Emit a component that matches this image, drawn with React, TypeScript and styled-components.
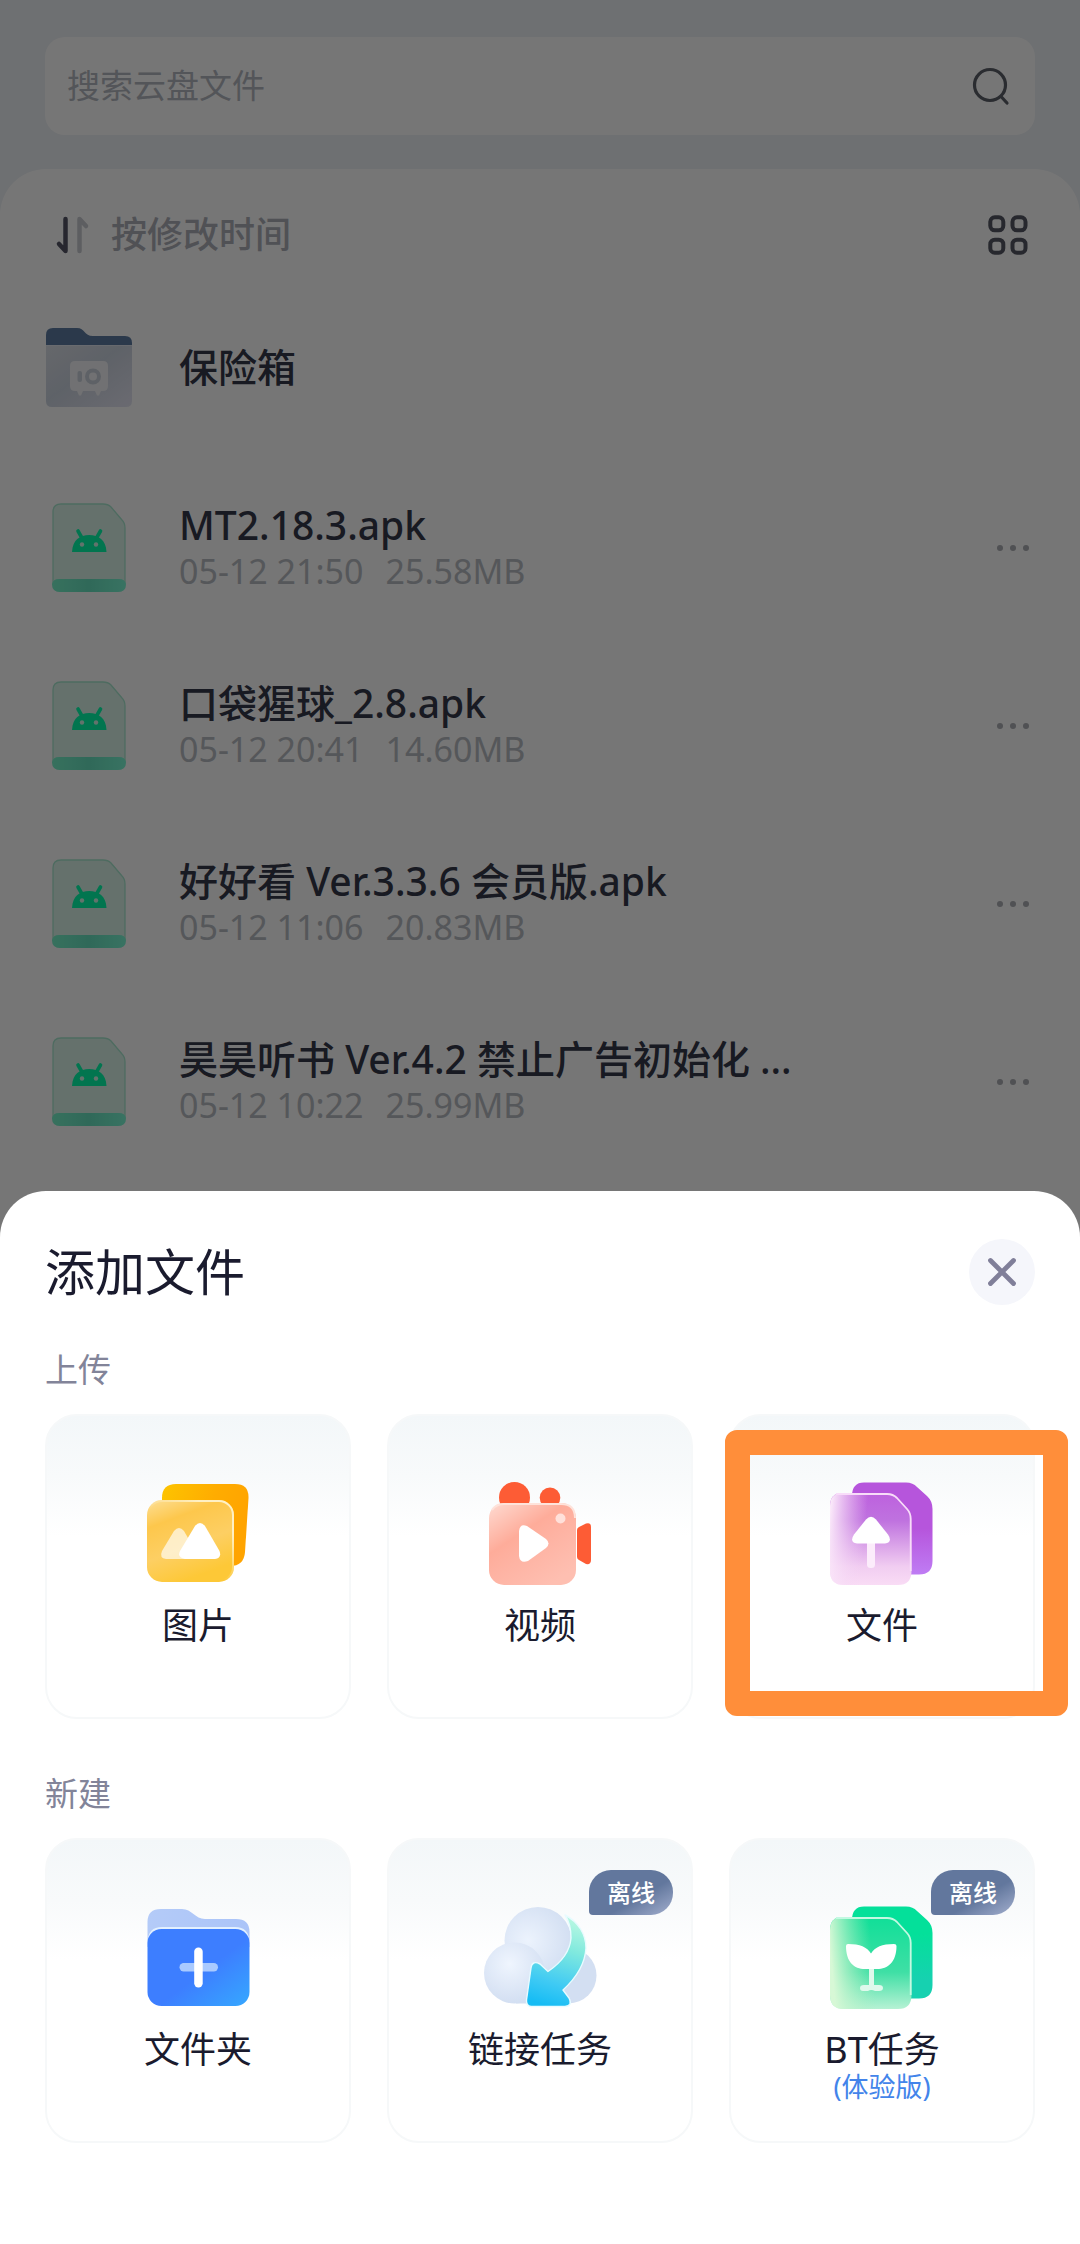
import React from 'react';
import styled, { createGlobalStyle } from 'styled-components';

const GlobalStyle = createGlobalStyle`
  * {
    box-sizing: border-box;
  }

  body {
    margin: 0;
    background: #eef2f6;
    color: #1a1b2e;
    font-family: 'Noto Sans', 'Noto Sans CJK SC', sans-serif;
  }

  button {
    padding: 0;
    border: 0;
    background: none;
    color: inherit;
    font: inherit;
    cursor: pointer;
  }

  h1, h2, ul, p {
    margin: 0;
    padding: 0;
  }

  ul {
    list-style: none;
  }

  svg {
    display: block;
    flex: none;
  }
`;

const Screen = styled.div`
  display: flex;
  flex-direction: column;
  min-height: 100vh;
`;

const TopBar = styled.header`
  padding: 37px 45px 34px;
`;

const SearchBox = styled.label`
  display: flex;
  align-items: center;
  height: 98px;
  padding: 0 24px 0 22px;
  border-radius: 20px;
  background: #fff;
`;

const SearchInput = styled.input`
  flex: 1;
  min-width: 0;
  padding: 0;
  border: 0;
  outline: 0;
  background: none;
  font: inherit;
  font-size: 33px;
  line-height: 48px;

  &::placeholder {
    color: #b4b7c0;
    opacity: 1;
  }
`;

const Panel = styled.main`
  flex: 1;
  padding: 30px 45px 0;
  border-radius: 46px 46px 0 0;
  background: #fff;
`;

const SortBar = styled.div`
  display: flex;
  align-items: center;
  justify-content: space-between;
  height: 72px;
  padding: 0 7px 0 10px;
`;

const SortButton = styled.button`
  display: flex;
  align-items: center;
  gap: 20px;
  color: #adb0b9;
  font-size: 36px;
  font-weight: 500;
  line-height: 48px;
`;

const FileList = styled.ul`
  padding-top: 4px;
`;

const FileRow = styled.li<{ $tall?: boolean }>`
  display: grid;
  grid-template-columns: 87px 1fr 44px;
  align-items: center;
  column-gap: 47px;
  height: ${({ $tall }) => ($tall ? 184 : 178)}px;
`;

const IconSlot = styled.div`
  display: flex;
  justify-content: center;
`;

const FileText = styled.div`
  min-width: 0;
`;

const FileName = styled.p`
  color: #35384a;
  font-size: 39px;
  font-weight: 500;
  line-height: 46px;
  white-space: nowrap;
`;

const FileMeta = styled.p`
  display: flex;
  gap: 22px;
  color: #b9bcc3;
  font-size: 34px;
  line-height: 46px;
`;

const Backdrop = styled.div`
  position: fixed;
  inset: 0;
  display: flex;
  flex-direction: column;
  justify-content: flex-end;
  background: rgba(0, 0, 0, 0.537);
`;

const Sheet = styled.section`
  padding: 47px 45px 101px;
  border-radius: 46px 46px 0 0;
  background: #fff;
`;

const SheetHeader = styled.header`
  display: flex;
  align-items: center;
  justify-content: space-between;
  margin-bottom: 40px;
`;

const SheetTitle = styled.h1`
  font-size: 50px;
  font-weight: 400;
  line-height: 68px;
`;

const CloseButton = styled.button`
  display: flex;
  align-items: center;
  justify-content: center;
  width: 66px;
  height: 66px;
  border-radius: 50%;
  background: #f5f6fb;
`;

const Group = styled.section`
  & + & {
    margin-top: 51px;
  }
`;

const GroupTitle = styled.h2`
  margin-bottom: 20px;
  color: #828499;
  font-size: 33px;
  font-weight: 400;
  line-height: 48px;
`;

const CardGrid = styled.ul`
  display: grid;
  grid-template-columns: repeat(3, 1fr);
  gap: 36px;
`;

const CardItem = styled.li`
  position: relative;
`;

const Card = styled.button`
  display: flex;
  flex-direction: column;
  align-items: center;
  width: 100%;
  min-height: 305px;
  padding-top: 62px;
  border: 2px solid #f6f8f9;
  border-radius: 32px;
  background: linear-gradient(#f3f7f9, #f8fafb 20%, #fff 40%);
`;

const CardLabel = styled.span`
  margin-top: 16px;
  font-size: 36px;
  line-height: 44px;
`;

const CardNote = styled.span`
  color: #4384ea;
  font-size: 27px;
  line-height: 30px;
`;

const Badge = styled.span`
  position: absolute;
  top: 32px;
  right: 20px;
  padding: 0 18px;
  border-radius: 22px 22px 22px 4px;
  background: linear-gradient(150deg, #62779d 60%, #a3afce);
  color: #fff;
  font-size: 24px;
  font-weight: 500;
  line-height: 45px;
`;

const Highlight = styled.div`
  position: absolute;
  inset: 16px -33px 3px -4px;
  border: 25px solid #ff8e3a;
  border-radius: 12px;
  pointer-events: none;
`;

const SearchIcon = () => (
  <svg width="40" height="40" viewBox="0 0 40 40" fill="none" stroke="#5c5f69" strokeWidth="3.2" strokeLinecap="round">
    <circle cx="19" cy="19" r="15.5" />
    <path d="M30.5 31L36 37" />
  </svg>
);

const SortIcon = () => (
  <svg width="36" height="40" viewBox="0 0 36 40" fill="none" strokeWidth="4.5" strokeLinecap="round" strokeLinejoin="round">
    <path d="M10.500 4V36L4 29" stroke="#545667" />
    <path d="M24.500 36V4L31 11" stroke="#c9cbd1" />
  </svg>
);

const GridIcon = () => (
  <svg width="40" height="40" viewBox="0 0 40 40" fill="none" stroke="#545763" strokeWidth="4">
    <rect x="2.300" y="2.300" width="13" height="13" rx="4.500" />
    <rect x="24.500" y="2.300" width="13" height="13" rx="4.500" />
    <rect x="2.300" y="24.700" width="13" height="13" rx="4.500" />
    <rect x="24.500" y="24.700" width="13" height="13" rx="4.500" />
  </svg>
);

const MoreIcon = () => (
  <svg width="44" height="44" viewBox="0 0 44 44" fill="#adafb5">
    <circle cx="9" cy="22" r="3" />
    <circle cx="22" cy="22" r="3" />
    <circle cx="35" cy="22" r="3" />
  </svg>
);

const CloseIcon = () => (
  <svg width="30" height="30" viewBox="0 0 30 30" stroke="#807f99" strokeWidth="4.8" strokeLinecap="round">
    <path d="M3.500 3.500L26.500 26.500M26.500 3.500L3.500 26.500" />
  </svg>
);

const SafeIcon = () => (
  <svg width="86" height="80" viewBox="0 0 86 80">
    <defs>
      <linearGradient id="safeFront" x1="0" y1="0" x2="1" y2="1">
        <stop offset="0" stopColor="#dce0e8" />
        <stop offset="0.450" stopColor="#ccd4e0" />
        <stop offset="1" stopColor="#e6e6f4" />
      </linearGradient>
    </defs>
    <path d="M0 26V8Q0 1 7 1H31C39 1 38 9 47 9H79Q86 9 86 16V26Z" fill="#5d7ca2" />
    <path d="M0 18H86V74Q86 80 80 80H6Q0 80 0 74Z" fill="url(#safeFront)" />
    <path d="M0 18.500H86" stroke="#e9eef6" strokeOpacity="0.600" />
    <path d="M29 34H57Q62 34 62 39V59Q62 64 57 64H55L53 68.500H51L49 64H37L35 68.500H33L31 64H29Q24 64 24 59V39Q24 34 29 34Z" fill="#f4f5f8" />
    <rect x="31.500" y="44" width="4.500" height="11" rx="2" fill="#ccd2dd" />
    <circle cx="47" cy="49.500" r="6" fill="none" stroke="#ccd2dd" strokeWidth="4" />
  </svg>
);

const ApkIcon = () => (
  <svg width="74" height="90" viewBox="0 0 74 90">
    <defs>
      <linearGradient id="apkBar" x1="0" y1="0" x2="1" y2="0">
        <stop offset="0" stopColor="#78f4cb" />
        <stop offset="0.500" stopColor="#68e3c0" />
        <stop offset="1" stopColor="#7bf8d4" />
      </linearGradient>
    </defs>
    <path d="M9 1H51Q56 1 59 4L70 17Q73 20 73 25V81Q73 88 66 88H8Q1 88 1 81V9Q1 1 9 1Z" fill="#daf4ea" stroke="#a8e8cf" strokeWidth="1.300" />
    <path d="M0 81Q1 76 7 76H67Q73 76 74 81Q74 89 66 89H8Q0 89 0 81Z" fill="url(#apkBar)" />
    <g transform="translate(20 26)">
      <path d="M0 23C.5 11 8 6 17.200 6S34 11 34.500 23Z" fill="#05fcac" />
      <path d="M6 2L10 9M28.500 2L24.500 9" stroke="#05fcac" strokeWidth="3.600" strokeLinecap="round" />
      <circle cx="10" cy="15.500" r="2.200" fill="#d4f9e9" />
      <circle cx="24" cy="15.500" r="2.200" fill="#d4f9e9" />
    </g>
  </svg>
);

const PictureIcon = () => (
  <svg width="120" height="110" viewBox="0 0 120 110">
    <defs>
      <linearGradient id="picBack" x1="0" y1="0" x2="1" y2="0.300">
        <stop offset="0" stopColor="#fdc400" />
        <stop offset="0.600" stopColor="#ffac00" />
        <stop offset="1" stopColor="#ffa400" />
      </linearGradient>
      <linearGradient id="picFront" x1="0" y1="0" x2="0.400" y2="1">
        <stop offset="0" stopColor="#fddf96" />
        <stop offset="0.300" stopColor="#fdc74c" />
        <stop offset="0.650" stopColor="#fdcf63" />
        <stop offset="1" stopColor="#fdc837" />
      </linearGradient>
      <linearGradient id="picEdge" x1="0" y1="1" x2="1" y2="0">
        <stop offset="0.450" stopColor="#fff2cc" stopOpacity="0" />
        <stop offset="0.800" stopColor="#fff0c4" />
      </linearGradient>
    </defs>
    <path d="M38 6H97Q111 6 110.500 20L107 74Q106 88 92 88H38Q24 88 24 74V20Q24 6 38 6Z" fill="url(#picBack)" />
    <rect x="9" y="22" width="87" height="82" rx="15" fill="url(#picFront)" />
    <rect x="10" y="23" width="85" height="80" rx="14" fill="none" stroke="url(#picEdge)" strokeWidth="2" />
    <path d="M36 53Q41 47 46 53L62 81H28Q21 80 24 73Z" fill="#fff" fillOpacity="0.660" />
    <path d="M57 48Q62 42 67 48L81.500 73Q84 80 77 81H47Q39 80 42 73Z" fill="#fff" />
  </svg>
);

const VideoIcon = () => (
  <svg width="120" height="110" viewBox="0 0 120 110">
    <defs>
      <linearGradient id="videoBody" x1="0" y1="0" x2="0.700" y2="1">
        <stop offset="0" stopColor="#fedbd2" />
        <stop offset="0.420" stopColor="#feac9a" />
        <stop offset="0.620" stopColor="#feb3a3" />
        <stop offset="1" stopColor="#febfb1" />
      </linearGradient>
    </defs>
    <g fill="#fd5c35">
      <circle cx="34.500" cy="19.500" r="15.500" />
      <circle cx="70" cy="19.800" r="10.300" />
      <path d="M97 52Q97 50 99 49L106 45.500Q111 44 111 49V82Q111 87 106 86L99 82Q97 81 97 79Z" />
    </g>
    <rect x="9" y="25" width="87" height="82" rx="15" fill="url(#videoBody)" />
    <path d="M12 32Q16 26 24 26H81Q95 26 95 40" fill="none" stroke="#fee3db" strokeWidth="2" />
    <circle cx="80.500" cy="40.500" r="5" fill="#ffe0da" />
    <path d="M39 53Q40 45 47 48L66 61Q71 65.500 66 70L48 83Q40 86 39 78Z" fill="#fff" />
  </svg>
);

const backPage = 'M42 4.500H84Q91 4.500 95 9L105 18Q110.500 23 110.500 31V83Q110.500 96.500 97 96.500H43Q30 96.500 30 83V18Q30 4.500 42 4.500Z';
const frontPage = 'M21 15H65Q71 15 75 19L86 31Q89.500 35 89.500 41V93Q89.500 107 76 107H22Q8 107 8 93V28Q8 15 21 15Z';
const frontEdge = 'M14 16H65Q71 16 75 20L85 31Q88.700 35 88.700 41V93';

const UploadFileIcon = () => (
  <svg width="120" height="110" viewBox="0 0 120 110">
    <defs>
      <linearGradient id="upBack" x1="0" y1="0" x2="0" y2="1">
        <stop offset="0.500" stopColor="#b655dc" />
        <stop offset="1" stopColor="#bf7cf4" />
      </linearGradient>
      <linearGradient id="upFront" x1="0" y1="0" x2="0" y2="1">
        <stop offset="0" stopColor="#bd61de" />
        <stop offset="0.300" stopColor="#bf72df" />
        <stop offset="0.800" stopColor="#f1cdf1" />
        <stop offset="1" stopColor="#f9dcf5" />
      </linearGradient>
      <linearGradient id="upHaze" x1="0" y1="0.200" x2="1" y2="0.300">
        <stop offset="0" stopColor="#fbeafa" />
        <stop offset="0.450" stopColor="#f4d3f4" stopOpacity="0" />
      </linearGradient>
    </defs>
    <path d={backPage} fill="url(#upBack)" />
    <path d={frontPage} fill="url(#upFront)" />
    <path d={frontPage} fill="url(#upHaze)" />
    <path d={frontEdge} fill="none" stroke="#f8dcf9" strokeWidth="1.800" />
    <rect x="45" y="60" width="8" height="30" rx="3.500" fill="#fcecfb" />
    <path d="M44 41.500Q49 36 54 41.500L66 56.500Q71 64 63 65.500H35Q27 64 32 56.500Z" fill="#fff" />
  </svg>
);

const TorrentIcon = () => (
  <svg width="120" height="110" viewBox="0 0 120 110">
    <defs>
      <linearGradient id="btBack" x1="0" y1="0" x2="0" y2="1">
        <stop offset="0.300" stopColor="#04e09a" />
        <stop offset="0.800" stopColor="#16d1b0" />
      </linearGradient>
      <linearGradient id="btFront" x1="0" y1="0" x2="0" y2="1">
        <stop offset="0" stopColor="#10df98" />
        <stop offset="0.600" stopColor="#3fdfa5" />
        <stop offset="1" stopColor="#b6f2d4" />
      </linearGradient>
      <linearGradient id="btHaze" x1="0" y1="0.300" x2="1" y2="0.200">
        <stop offset="0" stopColor="#d7f8d6" />
        <stop offset="0.500" stopColor="#a8efc0" stopOpacity="0" />
      </linearGradient>
    </defs>
    <path d={backPage} fill="url(#btBack)" />
    <path d={frontPage} fill="url(#btFront)" />
    <path d={frontPage} fill="url(#btHaze)" />
    <path d={frontEdge} fill="none" stroke="#c3f9e2" strokeWidth="1.800" />
    <path d="M47 65H52V83H47ZM42 83H57Q61 83 61 86T57 89H53Q49 87 46 89H41Q38 89 38 86T42 83Z" fill="#dff9ec" />
    <path d="M24 44Q24 42 26 42C38 42 45 45 49 51.500C53 45 60 42 72 42Q74.500 42 74.500 44C74.500 60 66 67 55 67H43C32 67 24 60 24 44Z" fill="#fff" />
  </svg>
);

const NewFolderIcon = () => (
  <svg width="120" height="110" viewBox="0 0 120 110">
    <defs>
      <linearGradient id="folderFront" x1="0" y1="0" x2="1" y2="1">
        <stop offset="0.550" stopColor="#3d7eff" />
        <stop offset="1" stopColor="#36a8ff" />
      </linearGradient>
      <linearGradient id="folderBack" x1="0" y1="0" x2="1" y2="0">
        <stop offset="0" stopColor="#b4cbf8" />
        <stop offset="1" stopColor="#abc4f8" />
      </linearGradient>
    </defs>
    <path d="M9.500 45V20Q9.500 7 23 7H44C54 7 57 17 67 17H98Q111.500 17 111.500 30V45Z" fill="url(#folderBack)" />
    <path d="M9.500 40Q10 25 24 25H97Q111 25 111.500 40" fill="#e2f0ff" />
    <rect x="9.500" y="27" width="102" height="77" rx="14" fill="url(#folderFront)" />
    <rect x="41.500" y="61" width="38.500" height="8.500" rx="4.200" fill="#a9caff" />
    <rect x="56.200" y="45.500" width="8.500" height="40" rx="4.200" fill="#fff" />
  </svg>
);

const CloudLinkIcon = () => (
  <svg width="120" height="110" viewBox="0 0 120 110">
    <defs>
      <radialGradient id="cloudTop" cx="0.350" cy="0.500" r="0.650">
        <stop offset="0" stopColor="#ecf3fd" />
        <stop offset="1" stopColor="#d3dff2" />
      </radialGradient>
      <radialGradient id="cloudLeft" cx="0.420" cy="0.350" r="0.650">
        <stop offset="0" stopColor="#eff5fe" />
        <stop offset="1" stopColor="#d3dff2" />
      </radialGradient>
      <linearGradient id="cloudArrow" x1="0.600" y1="0" x2="0.400" y2="1">
        <stop offset="0" stopColor="#b9f8e2" />
        <stop offset="0.350" stopColor="#80e9de" />
        <stop offset="0.750" stopColor="#3fcaf4" />
        <stop offset="1" stopColor="#16bcf4" />
      </linearGradient>
    </defs>
    <circle cx="88.500" cy="73.500" r="28" fill="#d3dff2" />
    <path d="M36 50H88V101.500H36Z" fill="#d3dff2" />
    <circle cx="58" cy="38.500" r="33.500" fill="url(#cloudTop)" />
    <circle cx="34.500" cy="71" r="30.500" fill="url(#cloudLeft)" />
    <path
      d="M85 13C99 20 106 33 106 46C105 63 95 77 83 88L89 96Q93 104 85 104.500H51Q46 104 46.500 98L51 66Q52 58 60 62L68 69.500C82 60 90 49 91 36C91 27 89 19 85 13Z"
      fill="url(#cloudArrow)"
      stroke="#e8fbff"
      strokeWidth="1.400"
      strokeLinejoin="round"
    />
  </svg>
);

const files = [
  { name: 'MT2.18.3.apk', time: '05-12 21:50', size: '25.58MB' },
  { name: '口袋猩球_2.8.apk', time: '05-12 20:41', size: '14.60MB' },
  { name: '好好看 Ver.3.3.6 会员版.apk', time: '05-12 11:06', size: '20.83MB' },
  { name: '昊昊听书 Ver.4.2 禁止广告初始化 …', time: '05-12 10:22', size: '25.99MB' },
];

interface Action {
  label: string;
  Icon: () => React.ReactElement;
  note?: string;
  badge?: string;
  highlighted?: boolean;
}

const groups: { title: string; actions: Action[] }[] = [
  {
    title: '上传',
    actions: [
      { label: '图片', Icon: PictureIcon },
      { label: '视频', Icon: VideoIcon },
      { label: '文件', Icon: UploadFileIcon, highlighted: true },
    ],
  },
  {
    title: '新建',
    actions: [
      { label: '文件夹', Icon: NewFolderIcon },
      { label: '链接任务', Icon: CloudLinkIcon, badge: '离线' },
      { label: 'BT任务', Icon: TorrentIcon, badge: '离线', note: '(体验版)' },
    ],
  },
];

export default function App() {
  return (
    <>
      <GlobalStyle />
      <Screen lang="zh-CN">
        <TopBar>
          <SearchBox>
            <SearchInput type="text" aria-label="搜索云盘文件" placeholder="搜索云盘文件" />
            <SearchIcon />
          </SearchBox>
        </TopBar>
        <Panel>
          <SortBar>
            <SortButton type="button">
              <SortIcon />
              按修改时间
            </SortButton>
            <button type="button" aria-label="网格视图">
              <GridIcon />
            </button>
          </SortBar>
          <FileList>
            <FileRow $tall>
              <IconSlot>
                <SafeIcon />
              </IconSlot>
              <FileName>保险箱</FileName>
            </FileRow>
            {files.map((file) => (
              <FileRow key={file.name}>
                <IconSlot>
                  <ApkIcon />
                </IconSlot>
                <FileText>
                  <FileName>{file.name}</FileName>
                  <FileMeta>
                    <span>{file.time}</span>
                    <span>{file.size}</span>
                  </FileMeta>
                </FileText>
                <button type="button" aria-label="更多">
                  <MoreIcon />
                </button>
              </FileRow>
            ))}
          </FileList>
        </Panel>
      </Screen>
      <Backdrop lang="zh-CN">
        <Sheet role="dialog" aria-labelledby="sheet-title">
          <SheetHeader>
            <SheetTitle id="sheet-title">添加文件</SheetTitle>
            <CloseButton type="button" aria-label="关闭">
              <CloseIcon />
            </CloseButton>
          </SheetHeader>
          {groups.map((group) => (
            <Group key={group.title}>
              <GroupTitle>{group.title}</GroupTitle>
              <CardGrid>
                {group.actions.map(({ label, Icon, note, badge, highlighted }) => (
                  <CardItem key={label}>
                    <Card type="button">
                      <Icon />
                      <CardLabel>{label}</CardLabel>
                      {note && <CardNote>{note}</CardNote>}
                      {badge && <Badge>{badge}</Badge>}
                    </Card>
                    {highlighted && <Highlight />}
                  </CardItem>
                ))}
              </CardGrid>
            </Group>
          ))}
        </Sheet>
      </Backdrop>
    </>
  );
}
